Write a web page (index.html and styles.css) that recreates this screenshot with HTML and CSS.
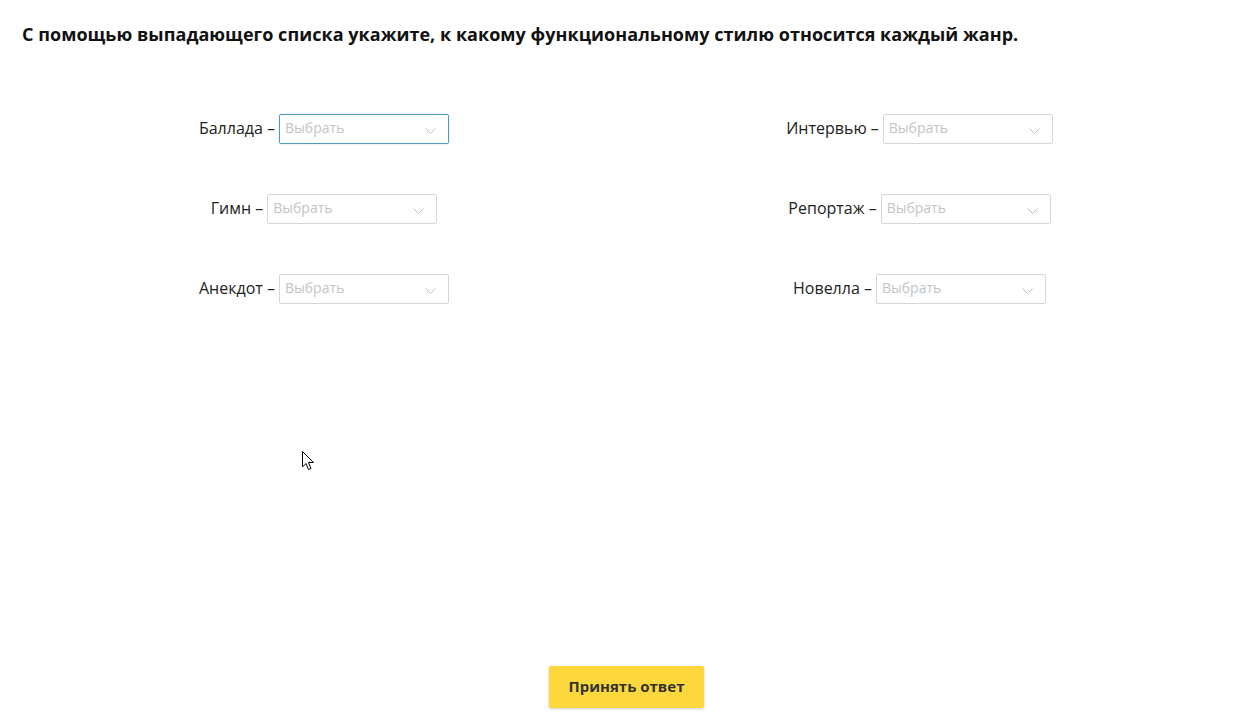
FILE: index.html
```html
<!DOCTYPE html>
<html lang="ru">
<head>
<meta charset="utf-8">
<title>Задание</title>
<link rel="stylesheet" href="styles.css">
</head>
<body>
<div class="page">
  <h1 class="task">С помощью выпадающего списка укажите, к какому функциональному стилю относится каждый жанр.</h1>
  <div class="grid">
    <div class="col col-left">
      <div class="item"><span class="label">Баллада –</span><div class="select focused"><span class="ph">Выбрать</span><svg class="chev" width="11" height="7" viewBox="0 0 11 7"><path d="M0.5 0.5 L5.5 5.5 L10.5 0.5" fill="none" stroke="#b9bdc1" stroke-width="1"/></svg></div></div>
      <div class="item"><span class="label">Гимн –</span><div class="select"><span class="ph">Выбрать</span><svg class="chev" width="11" height="7" viewBox="0 0 11 7"><path d="M0.5 0.5 L5.5 5.5 L10.5 0.5" fill="none" stroke="#b9bdc1" stroke-width="1"/></svg></div></div>
      <div class="item"><span class="label">Анекдот –</span><div class="select"><span class="ph">Выбрать</span><svg class="chev" width="11" height="7" viewBox="0 0 11 7"><path d="M0.5 0.5 L5.5 5.5 L10.5 0.5" fill="none" stroke="#b9bdc1" stroke-width="1"/></svg></div></div>
    </div>
    <div class="col col-right">
      <div class="item"><span class="label">Интервью –</span><div class="select"><span class="ph">Выбрать</span><svg class="chev" width="11" height="7" viewBox="0 0 11 7"><path d="M0.5 0.5 L5.5 5.5 L10.5 0.5" fill="none" stroke="#b9bdc1" stroke-width="1"/></svg></div></div>
      <div class="item"><span class="label">Репортаж –</span><div class="select"><span class="ph">Выбрать</span><svg class="chev" width="11" height="7" viewBox="0 0 11 7"><path d="M0.5 0.5 L5.5 5.5 L10.5 0.5" fill="none" stroke="#b9bdc1" stroke-width="1"/></svg></div></div>
      <div class="item"><span class="label">Новелла –</span><div class="select"><span class="ph">Выбрать</span><svg class="chev" width="11" height="7" viewBox="0 0 11 7"><path d="M0.5 0.5 L5.5 5.5 L10.5 0.5" fill="none" stroke="#b9bdc1" stroke-width="1"/></svg></div></div>
    </div>
  </div>
  <div class="actions"><button class="submit">Принять ответ</button></div>
</div>
<svg class="cursor" width="13" height="20" viewBox="0 0 13 20"><path d="M0.5 0.5 L0.5 16 L4 12.5 L6.5 18.5 L9 17.5 L6.5 11.5 L11.5 11.5 Z" fill="#fff" stroke="#000" stroke-width="1" stroke-linejoin="miter"/></svg>
</body>
</html>
```
FILE: styles.css
```css
html, body {
  margin: 0;
  padding: 0;
  background: #fff;
}
body {
  font-family: "Open Sans", "Noto Sans", sans-serif;
  color: #222;
  position: relative;
}
.page {
  height: 721px;
  box-sizing: border-box;
  padding: 22px 22px 13px;
  display: flex;
  flex-direction: column;
}
.task {
  margin: 0;
  font-size: 18px;
  font-weight: 700;
  line-height: 25px;
  letter-spacing: 0.04px;
  color: #111;
}
.grid {
  margin-top: 67px;
  display: grid;
  grid-template-columns: 604px 587px;
}
.col {
  display: flex;
  flex-direction: column;
  align-items: center;
  gap: 50px;
}
.item {
  display: flex;
  align-items: center;
  height: 30px;
}
.label {
  font-size: 16px;
  line-height: 22px;
  color: #222;
  margin-right: 4px;
  padding-bottom: 2px;
}
.select {
  width: 170px;
  height: 30px;
  box-sizing: border-box;
  border: 1px solid #d4d6d8;
  border-radius: 2px;
  display: flex;
  align-items: center;
  justify-content: space-between;
  padding: 0 12px 0 5px;
}
.select.focused {
  border-color: #4e9cc4;
  box-shadow: 0 0 2px rgba(78, 156, 196, 0.35);
}
.ph {
  font-size: 14px;
  line-height: 20px;
  color: #c2c5c8;
  padding-bottom: 2px;
}
.chev {
  margin-top: 4px;
}
.actions {
  margin-top: auto;
  display: flex;
  justify-content: center;
}
.submit {
  width: 155px;
  height: 42px;
  border: none;
  border-radius: 2px;
  background: #fcd83d;
  color: #333;
  font-family: "Open Sans", "Noto Sans", sans-serif;
  font-size: 15px;
  font-weight: 700;
  line-height: 20px;
  padding: 0 0 2px;
  box-shadow: 0 1px 3px rgba(0, 0, 0, 0.2);
  cursor: pointer;
}
.cursor {
  position: absolute;
  left: 302px;
  top: 451px;
}
```
